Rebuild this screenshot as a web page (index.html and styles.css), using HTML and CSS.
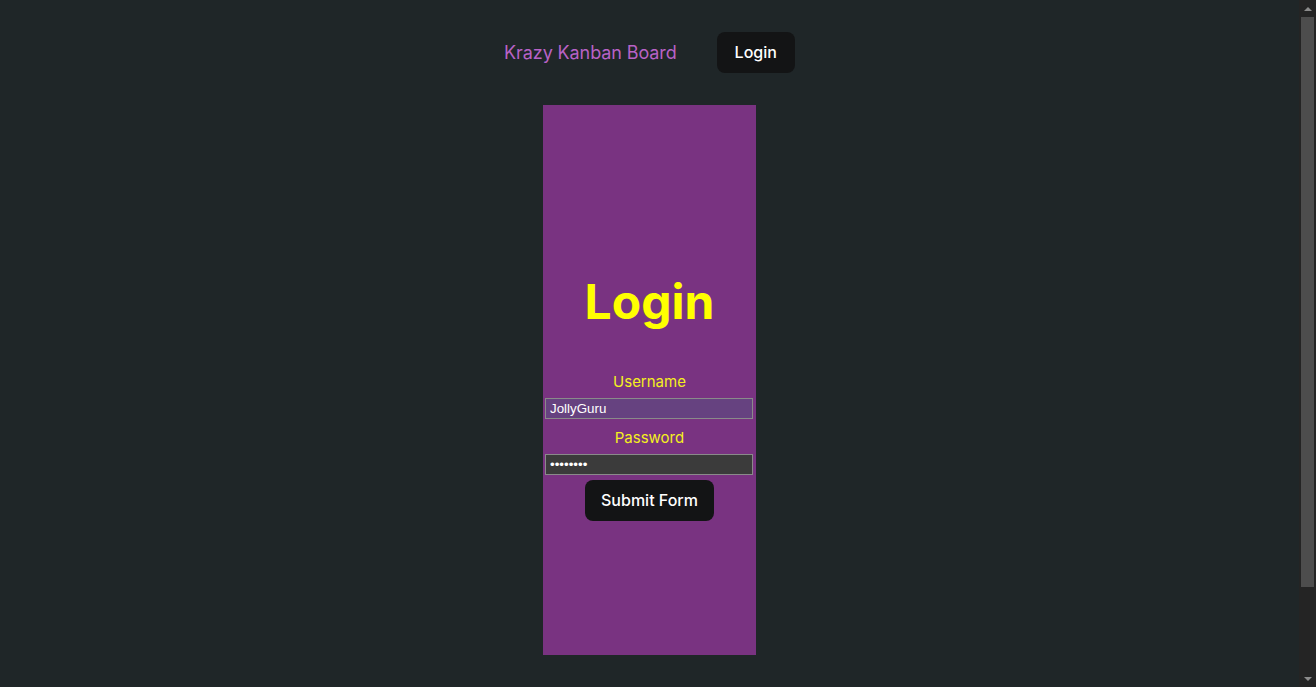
FILE: index.html
```html
<!DOCTYPE html>
<html lang="en">
<head>
<meta charset="utf-8">
<title>Krazy Kanban Board</title>
<link rel="stylesheet" href="styles.css">
</head>
<body>
<div class="window">
  <div class="page">
    <header class="nav">
      <span class="brand">Krazy Kanban Board</span>
      <button class="btn btn-nav">Login</button>
    </header>
    <main class="card">
      <h1 class="title">Login</h1>
      <form class="form">
        <label class="label" for="u">Username</label>
        <input class="field field-user" id="u" type="text" value="JollyGuru">
        <label class="label label-pass" for="p">Password</label>
        <input class="field field-pass" id="p" type="password" value="12345678">
        <button class="btn btn-submit" type="button">Submit Form</button>
      </form>
    </main>
  </div>
  <div class="scrollbar" aria-hidden="true">
    <div class="sb-btn"><span class="arrow-up"></span></div>
    <div class="sb-track"><div class="sb-thumb"></div></div>
    <div class="sb-btn"><span class="arrow-down"></span></div>
  </div>
</div>
</body>
</html>
```
FILE: styles.css
```css
html {
  background: #1f2628;
}
body {
  margin: 0;
  background: #1f2628;
  font-family: Inter, "Noto Sans", sans-serif;
  color: #ffffff;
  overflow: hidden;
}
.window {
  display: flex;
  height: 100vh;
}
.page {
  flex: 1;
  display: flex;
  flex-direction: column;
  align-items: center;
  padding-top: 32px;
}
.nav {
  display: flex;
  align-items: center;
  gap: 40px;
}
.brand {
  font-size: 18px;
  letter-spacing: -0.1px;
  color: #b862c6;
}
.btn {
  font-family: Inter, "Noto Sans", sans-serif;
  font-size: 16px;
  font-weight: 500;
  line-height: 19px;
  padding: 10px 17px;
  border: 1px solid transparent;
  border-radius: 8px;
  background: #131415;
  color: #ffffff;
  cursor: pointer;
}
.card {
  margin-top: 32px;
  width: 213px;
  height: 550px;
  flex-shrink: 0;
  background: #793381;
  box-sizing: border-box;
  padding-top: 171px;
  display: flex;
  flex-direction: column;
  align-items: center;
}
.title {
  margin: 0;
  font-size: 48px;
  font-weight: 700;
  line-height: 52px;
  color: #ffff00;
}
.form {
  margin-top: 42px;
  width: 100%;
  display: flex;
  flex-direction: column;
  align-items: center;
}
.label {
  font-size: 15px;
  line-height: 24px;
  color: #f4f01e;
}
.label-pass {
  margin-top: 7px;
}
.field {
  align-self: flex-start;
  margin: 4px 0 0 2px;
  width: 208px;
  height: 21px;
  box-sizing: border-box;
  border: 1px solid #8a8a8a;
  padding: 1px 4px;
  font-family: "Liberation Sans", Arial, sans-serif;
  font-size: 13.33px;
  color: #ffffff;
  outline: none;
}
.field-user {
  background: #664280;
}
.field-pass {
  background: #3b3b3b;
}
.btn-submit {
  margin-top: 5px;
  padding: 10px 15.5px;
}

/* simulated dark scrollbar */
.scrollbar {
  width: 17px;
  flex-shrink: 0;
  background: #242424;
  display: flex;
  flex-direction: column;
}
.sb-btn {
  height: 17px;
  display: flex;
  align-items: center;
  justify-content: center;
}
.arrow-up,
.arrow-down {
  width: 0;
  height: 0;
  border-left: 4px solid transparent;
  border-right: 4px solid transparent;
}
.arrow-up {
  border-bottom: 4px solid #8c8c8c;
}
.arrow-down {
  border-top: 4px solid #8c8c8c;
}
.sb-track {
  flex: 1;
  padding: 0 2px;
}
.sb-thumb {
  height: 570px;
  background: #4d4d4d;
}
```
